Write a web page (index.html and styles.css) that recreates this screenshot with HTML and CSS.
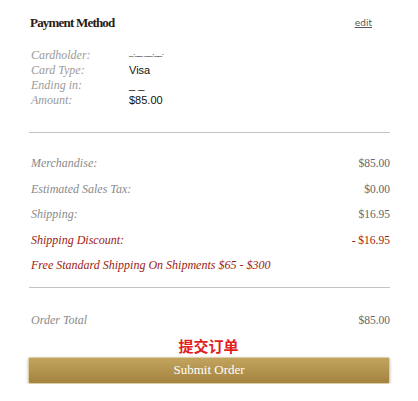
FILE: index.html
```html
<!DOCTYPE html>
<html lang="en">
<head>
  <meta charset="UTF-8">
  <title>Payment Method</title>
  <link rel="stylesheet" href="styles.css">
</head>
<body>
  <div class="summary">
    <div class="head">
      <h2>Payment Method</h2>
      <a href="#" class="edit">edit</a>
    </div>
    <table class="card">
      <tr><td class="lbl">Cardholder:</td><td class="val mask">_.__ __.__.</td></tr>
      <tr><td class="lbl">Card Type:</td><td class="val">Visa</td></tr>
      <tr><td class="lbl">Ending in:</td><td class="val">_ _</td></tr>
      <tr><td class="lbl">Amount:</td><td class="val">$85.00</td></tr>
    </table>
    <hr>
    <div class="totals">
      <div class="row"><span class="lbl">Merchandise:</span><span class="amt">$85.00</span></div>
      <div class="row"><span class="lbl">Estimated Sales Tax:</span><span class="amt">$0.00</span></div>
      <div class="row"><span class="lbl">Shipping:</span><span class="amt">$16.95</span></div>
      <div class="row red"><span class="lbl">Shipping Discount:</span><span class="amt">- $16.95</span></div>
      <div class="row red"><span class="lbl">Free Standard Shipping On Shipments $65 - $300</span></div>
    </div>
    <hr>
    <div class="row total"><span class="lbl">Order Total</span><span class="amt">$85.00</span></div>
    <div class="cn">提交订单</div>
    <button class="submit">Submit Order</button>
  </div>
</body>
</html>
```

FILE: styles.css
```css
body {
  margin: 0;
  background: #ffffff;
  font-family: "Liberation Serif", serif;
}
.summary {
  padding: 14px 28px 0 29px;
}
.head {
  display: flex;
  justify-content: space-between;
  align-items: center;
  padding: 0 18px 0 1px;
  height: 18px;
}
.head h2 {
  margin: 0;
  font-size: 13px;
  font-weight: bold;
  letter-spacing: -0.8px;
  color: #2a1a12;
}
.edit {
  font-family: "DejaVu Sans", sans-serif;
  font-size: 9px;
  color: #555555;
}
.card {
  border-collapse: collapse;
  margin-top: 17px;
}
.card td {
  padding: 0;
  height: 15px;
  line-height: 13px;
  vertical-align: top;
}
.card .lbl {
  width: 98px;
  padding-left: 2px;
  font-style: italic;
  font-size: 12px;
  color: #9a9a9a;
}
.card .val {
  font-family: "Liberation Sans", sans-serif;
  font-size: 11px;
  color: #111111;
}
.card .mask {
  font-size: 8px;
  letter-spacing: -0.5px;
  line-height: 8px;
}
hr {
  border: 0;
  border-top: 1px solid #c4c4c4;
  margin: 23px 0 0 0;
}
.totals {
  padding-top: 23px;
}
.row {
  display: flex;
  justify-content: space-between;
  align-items: baseline;
  height: 25.6px;
  padding-left: 2px;
  font-size: 12px;
  color: #8a8a8a;
}
.row .lbl {
  font-style: italic;
}
.row .amt {
  font-size: 11.5px;
  color: #666666;
}
.row.red .lbl,
.row.red .amt {
  color: #9e1a10;
}
.totals + hr {
  margin-top: 3px;
}
.total {
  margin-top: 25px;
  height: 19px;
}
.cn {
  text-align: center;
  font-family: "Noto Sans CJK SC", sans-serif;
  font-weight: bold;
  font-size: 15px;
  line-height: 22px;
  color: #e0201c;
  padding-right: 2px;
  margin-top: 3px;
}
.submit {
  display: block;
  width: 362px;
  height: 27px;
  margin: 0 0 0 -1px;
  border: 1px solid #dccfa6;
  border-radius: 2px;
  background: linear-gradient(#c3a45e, #a3833f);
  box-shadow: 0 1px 3px rgba(0, 0, 0, 0.25);
  color: #ffffff;
  font-family: "Liberation Serif", serif;
  font-size: 13px;
}
```
